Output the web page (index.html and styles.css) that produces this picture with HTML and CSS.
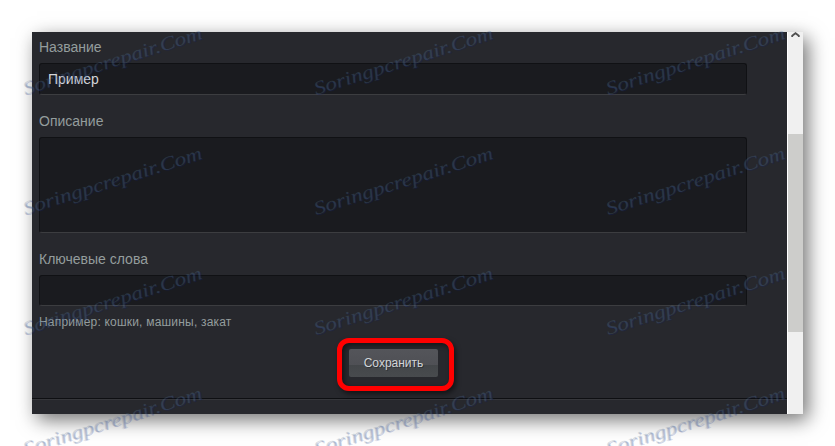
FILE: index.html
```html
<!DOCTYPE html>
<html lang="ru">
<head>
    <meta charset="UTF-8">
    <meta name="viewport" content="width=device-width, initial-scale=1.0">
    <title>Редактирование</title>
    <link rel="stylesheet" href="styles.css">
</head>
<body>
    <div class="window">
        <form class="content">
            <div class="fields">
                <label for="title">Название</label>
                <input type="text" id="title" name="title" value="Пример">
                <label for="description">Описание</label>
                <textarea id="description" name="description"></textarea>
                <label for="tags">Ключевые слова</label>
                <input type="text" id="tags" name="tags">
                <p class="hint">Например: кошки, машины, закат</p>
            </div>
            <div class="actions">
                <div class="highlight">
                    <button type="button" id="saveBtn">Сохранить</button>
                </div>
            </div>
        </form>
        <div class="scrollbar">
            <svg class="arrow" width="9" height="6" viewBox="0 0 9 6"><path d="M1.2 5V3.8L4.5 1.2L7.8 3.8V5" fill="none" stroke="#505050" stroke-width="1.8"/></svg>
            <div class="thumb"></div>
        </div>
    </div>

    <svg class="watermark" width="835" height="446" viewBox="0 0 835 446">
        <defs>
            <g id="mark">
                <text class="mark-shade" x="1" y="1" textLength="187" lengthAdjust="spacingAndGlyphs">Soringpcrepair.Com</text>
                <text class="mark-text" x="0" y="0" textLength="187" lengthAdjust="spacingAndGlyphs">Soringpcrepair.Com</text>
            </g>
        </defs>
        <use href="#mark" transform="translate(25 95) rotate(-17.6)"/>
        <use href="#mark" transform="translate(316 95) rotate(-17.6)"/>
        <use href="#mark" transform="translate(608 95) rotate(-17.6)"/>
        <use href="#mark" transform="translate(25 215) rotate(-17.6)"/>
        <use href="#mark" transform="translate(316 215) rotate(-17.6)"/>
        <use href="#mark" transform="translate(608 215) rotate(-17.6)"/>
        <use href="#mark" transform="translate(25 335) rotate(-17.6)"/>
        <use href="#mark" transform="translate(316 335) rotate(-17.6)"/>
        <use href="#mark" transform="translate(608 335) rotate(-17.6)"/>
        <use href="#mark" transform="translate(25 455) rotate(-17.6)"/>
        <use href="#mark" transform="translate(316 455) rotate(-17.6)"/>
        <use href="#mark" transform="translate(608 455) rotate(-17.6)"/>
    </svg>
</body>
</html>
```

FILE: styles.css
```css
* {
    box-sizing: border-box;
}

body {
    margin: 0;
    padding: 32px;
    height: 446px;
    overflow: hidden;
    background-color: #fff;
    font-family: "Liberation Sans", Arial, sans-serif;
}

.window {
    display: flex;
    width: 771px;
    height: 382px;
    box-shadow: 5px 6px 18px rgba(0, 0, 0, 0.55);
}

.content {
    width: 755px;
    background-color: #27282d;
}

.fields {
    width: 715px;
    height: 306px;
    padding-left: 7px;
}

label {
    display: block;
    height: 31px;
    padding-top: 7px;
    font-size: 14px;
    line-height: 16px;
    color: #949d9d;
}

input,
textarea {
    display: block;
    width: 708px;
    height: 32px;
    margin: 0 0 11px;
    padding: 0 8px;
    border: 1px solid #101114;
    border-bottom-color: #3c3d40;
    border-radius: 3px;
    outline: none;
    background-color: #1a1b1f;
    color: #d4d6da;
    font-family: inherit;
    font-size: 14px;
    resize: none;
}

textarea {
    height: 96px;
}

#tags {
    height: 31px;
    margin-bottom: 9px;
}

.hint {
    margin: 0;
    font-size: 12px;
    line-height: 15px;
    letter-spacing: 0.2px;
    color: #949d9d;
}

.actions {
    display: flex;
    height: 61px;
    padding-left: 305px;
    border-bottom: 1px solid #0e0f12;
    box-shadow: 0 1px 0 #36373b;
}

.highlight {
    display: flex;
    width: 117px;
    height: 53px;
    padding: 6px 0 0 7px;
    border: 5px solid #f00;
    border-radius: 12px;
    box-shadow: 2px 3px 5px rgba(0, 0, 0, 0.5), inset 2px 2px 5px rgba(0, 0, 0, 0.5);
}

button {
    width: 89px;
    height: 28px;
    padding: 0;
    border: none;
    border-radius: 2px;
    background: linear-gradient(#54555a 0, #4f5055 16px, #434649 16px, #484b4e 100%);
    color: #d2d5d8;
    font-family: inherit;
    font-size: 12px;
    text-shadow: 1px 1px 0 #303236;
}

.scrollbar {
    width: 16px;
    border-left: 1px solid #fff;
    background-color: #f0f0f0;
}

.arrow {
    display: block;
    height: 6px;
    margin: 0 0 96px 3px;
}

.thumb {
    height: 198px;
    background-color: #cdcdcb;
}

.watermark {
    position: absolute;
    top: 0;
    left: 0;
    pointer-events: none;
}

.watermark text {
    font-family: "Liberation Serif", serif;
    font-size: 19px;
    font-style: italic;
}

.mark-shade {
    fill: #0d1f80;
    opacity: 0.22;
}

.mark-text {
    fill: #5c8098;
    opacity: 0.26;
}
```
